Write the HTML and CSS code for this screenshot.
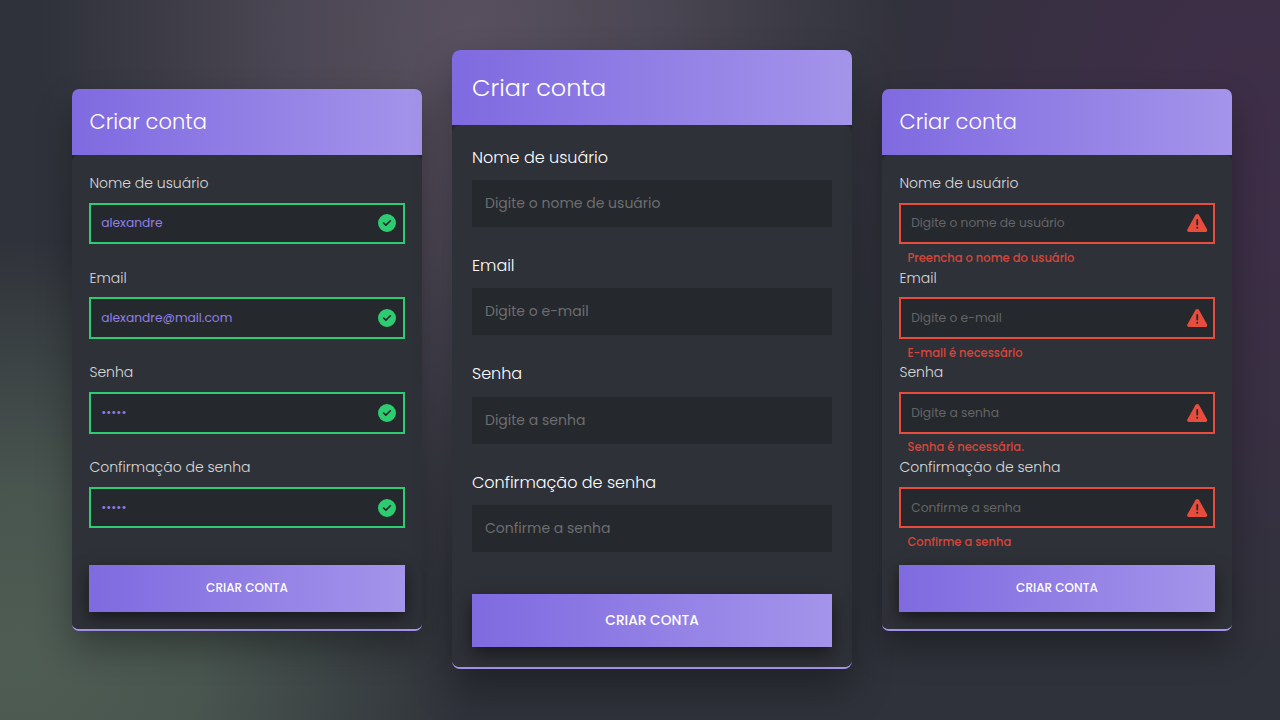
FILE: index.html
```html
<!DOCTYPE html>
<html lang="pt-BR">
<head>
<meta charset="utf-8">
<title>Criar conta</title>
<link rel="stylesheet" href="styles.css">
</head>
<body>
<svg class="sprite" width="0" height="0" aria-hidden="true">
  <symbol id="check" viewBox="0 0 512 512"><path d="M256 512A256 256 0 1 0 256 0a256 256 0 1 0 0 512zM369 209L241 337c-9.400 9.400-24.600 9.400-33.900 0l-64-64c-9.400-9.400-9.400-24.600 0-33.900s24.600-9.400 33.900 0l47 47L335 175c9.400-9.400 24.600-9.400 33.900 0s9.400 24.600 0 33.900z"/></symbol>
  <symbol id="warn" viewBox="0 0 576 512"><path fill-rule="evenodd" d="M569.500 440C588 472 564.800 512 527.900 512H48.100c-36.900 0-60-40-41.600-72L236.400 30c22-40 81.200-40 103.200 0zM288 145c-15 0-26 10-26 25v130c0 15 11 25 26 25s26-10 26-25V170c0-15-11-25-26-25zm0 219a28 28 0 1 0 0 56 28 28 0 0 0 0-56z"/></symbol>
</svg>
<main class="stage">
  <section class="card small valid">
    <h1 class="title">Criar conta</h1>
    <form class="form">
      <div class="field"><label>Nome de usuário</label><div class="control"><input type="text" value="alexandre"><svg class="icon"><use href="#check"/></svg></div></div>
      <div class="field"><label>Email</label><div class="control"><input type="text" value="alexandre@mail.com"><svg class="icon"><use href="#check"/></svg></div></div>
      <div class="field"><label>Senha</label><div class="control"><input type="password" value="12345"><svg class="icon"><use href="#check"/></svg></div></div>
      <div class="field"><label>Confirmação de senha</label><div class="control"><input type="password" value="12345"><svg class="icon"><use href="#check"/></svg></div></div>
      <button type="button">CRIAR CONTA</button>
    </form>
  </section>
  <section class="card">
    <h1 class="title">Criar conta</h1>
    <form class="form">
      <div class="field"><label>Nome de usuário</label><div class="control"><input type="text" placeholder="Digite o nome de usuário"></div></div>
      <div class="field"><label>Email</label><div class="control"><input type="text" placeholder="Digite o e-mail"></div></div>
      <div class="field"><label>Senha</label><div class="control"><input type="password" placeholder="Digite a senha"></div></div>
      <div class="field"><label>Confirmação de senha</label><div class="control"><input type="password" placeholder="Confirme a senha"></div></div>
      <button type="button">CRIAR CONTA</button>
    </form>
  </section>
  <section class="card small invalid">
    <h1 class="title">Criar conta</h1>
    <form class="form">
      <div class="field"><label>Nome de usuário</label><div class="control"><input type="text" placeholder="Digite o nome de usuário"><svg class="icon"><use href="#warn"/></svg></div><p class="error">Preencha o nome do usuário</p></div>
      <div class="field"><label>Email</label><div class="control"><input type="text" placeholder="Digite o e-mail"><svg class="icon"><use href="#warn"/></svg></div><p class="error">E-mail é necessário</p></div>
      <div class="field"><label>Senha</label><div class="control"><input type="password" placeholder="Digite a senha"><svg class="icon"><use href="#warn"/></svg></div><p class="error">Senha é necessária.</p></div>
      <div class="field"><label>Confirmação de senha</label><div class="control"><input type="password" placeholder="Confirme a senha"><svg class="icon"><use href="#warn"/></svg></div><p class="error">Confirme a senha</p></div>
      <button type="button">CRIAR CONTA</button>
    </form>
  </section>
</main>
</body>
</html>
```
FILE: styles.css
```css
* { box-sizing: border-box; margin: 0; padding: 0; }

body {
  width: 1280px;
  height: 720px;
  overflow: hidden;
  font-family: Poppins, Inter, "Open Sans", sans-serif;
  color: #fff;
  background:
    radial-gradient(ellipse 430px 560px at 470px 30px, rgba(94, 84, 100, 0.88), rgba(94, 84, 100, 0.6) 42%, transparent),
    radial-gradient(ellipse 420px 540px at 1250px 130px, rgba(67, 45, 76, 0.78), rgba(67, 45, 76, 0.5) 50%, transparent),
    radial-gradient(ellipse 450px 420px at 20px 660px, rgba(80, 95, 85, 0.95), rgba(80, 95, 85, 0.78) 40%, transparent),
    #2f323a;
}

.sprite { position: absolute; }

.stage {
  height: 719px;
  padding-left: 72px;
  display: flex;
  align-items: center;
  gap: 30px;
}

.card {
  flex: none;
  width: 25em;
  font-size: 16px;
  border-radius: 0.5em;
  border-bottom: 2px solid #a393eb;
  background: linear-gradient(#25272c 50%, #2f3138 50%);
  box-shadow: 0 1.25em 2.5em rgba(0, 0, 0, 0.3);
}

.small { font-size: 14px; margin-top: 1px; }

.title {
  height: 3.125em;
  padding-left: 0.8333em;
  border-radius: 0.333em 0.333em 0 0;
  background: linear-gradient(90deg, #7f6ae0, #a494ea);
  font-size: 1.5em;
  font-weight: 300;
  line-height: 3.17em;
}

.form {
  padding: 1.25em;
  border-radius: 0.5em;
  background: #2f3138;
}

.small .form { padding: 17.5px 17.4px; }

.field { height: 6.771em; }

label {
  display: block;
  margin-bottom: 0.6375em;
  padding-top: 0.05em;
  font-weight: 300;
  line-height: 1.5em;
}

.control { position: relative; height: 2.958em; }

input {
  display: block;
  width: 100%;
  height: 100%;
  padding: 0 0.93em;
  border: 0;
  outline: 0;
  background: #25282c;
  color: #917fe6;
  font: inherit;
  font-size: 0.875em;
}

input::placeholder { color: #6c6e70; opacity: 1; }

.small input { padding: 0 0.8em; }
.small input::placeholder { color: #636567; }
.small label { color: #dadada; }
.valid input { border: 2px solid #2ecc71; }
.invalid input { border: 2px solid #e74c3c; }

.icon {
  position: absolute;
  top: 50%;
  height: 18px;
  transform: translateY(-50%);
}

.valid .icon { right: 9px; width: 18px; fill: #2ecc71; }
.invalid .icon { right: 7px; width: 20.5px; fill: #e74c3c; }

.error {
  padding: 0.42em 0 0 0.7em;
  color: #d5463a;
  font-size: 0.822em;
  font-weight: 500;
  line-height: 1.7em;
}

button {
  display: block;
  width: 100%;
  height: 3.85em;
  margin-top: 1.163em;
  border: 0;
  background: linear-gradient(90deg, #7f6ae0, #a494ea);
  box-shadow: 0 0.5em 1.25em rgba(0, 0, 0, 0.5);
  color: #fff;
  font: 500 0.86em/1 Poppins, Inter, sans-serif;
}
```
